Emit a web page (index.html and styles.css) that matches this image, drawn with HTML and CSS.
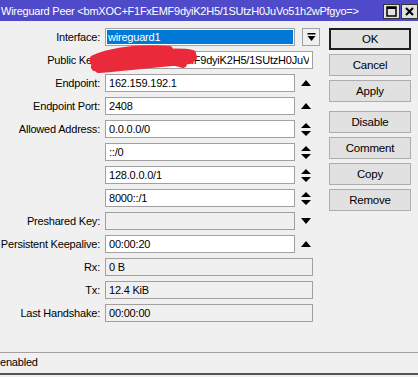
FILE: index.html
```html
<!DOCTYPE html>
<html lang="en">
<head>
    <meta charset="UTF-8">
    <title>Wireguard Peer</title>
    <link rel="stylesheet" href="styles.css">
</head>
<body>
<div class="window">
    <div class="titlebar">
        <span class="title">Wireguard Peer &lt;bmXOC+F1FxEMF9dyiK2H5/1SUtzH0JuVo51h2wPfgyo=&gt;</span>
        <div class="title-btns">
            <span class="tbtn"><svg width="11" height="11" viewBox="0 0 11 11"><rect x="1" y="1" width="9" height="9" fill="none" stroke="#000" stroke-width="1.5"/><rect x="1" y="1" width="9" height="2" fill="#000"/></svg></span>
            <span class="tbtn"><svg width="11" height="11" viewBox="0 0 11 11"><path d="M2 2L9 9M9 2L2 9" stroke="#000" stroke-width="2"/></svg></span>
        </div>
    </div>

    <div class="main">
        <div class="form">
            <label>Interface:</label>
            <div class="field selected">wireguard1</div>
            <span class="dropbtn"><svg width="9" height="9" viewBox="0 0 9 9"><rect x="0.5" y="0" width="8" height="1.5" fill="#000"/><path d="M0.5 3H8.5L4.5 8Z" fill="#000"/></svg></span>

            <label>Public Key:</label>
            <input class="field wide" type="text" readonly value="bmXOC+F1FxEMF9dyiK2H5/1SUtzH0JuVo51h2wPfgyo=">

            <label>Endpoint:</label>
            <div class="field">162.159.192.1</div>
            <span class="arrow"><svg width="10" height="6" viewBox="0 0 10 6"><path d="M0 6H10L5 0Z" fill="#000"/></svg></span>

            <label>Endpoint Port:</label>
            <div class="field">2408</div>
            <span class="arrow"><svg width="10" height="6" viewBox="0 0 10 6"><path d="M0 6H10L5 0Z" fill="#000"/></svg></span>

            <label>Allowed Address:</label>
            <div class="field">0.0.0.0/0</div>
            <span class="arrow"><svg width="10" height="13" viewBox="0 0 10 13"><path d="M0 5H10L5 0Z M0 8H10L5 13Z" fill="#000"/></svg></span>

            <label></label>
            <div class="field">::/0</div>
            <span class="arrow"><svg width="10" height="13" viewBox="0 0 10 13"><path d="M0 5H10L5 0Z M0 8H10L5 13Z" fill="#000"/></svg></span>

            <label></label>
            <div class="field">128.0.0.0/1</div>
            <span class="arrow"><svg width="10" height="13" viewBox="0 0 10 13"><path d="M0 5H10L5 0Z M0 8H10L5 13Z" fill="#000"/></svg></span>

            <label></label>
            <div class="field">8000::/1</div>
            <span class="arrow"><svg width="10" height="13" viewBox="0 0 10 13"><path d="M0 5H10L5 0Z M0 8H10L5 13Z" fill="#000"/></svg></span>

            <label>Preshared Key:</label>
            <div class="field readonly"></div>
            <span class="arrow"><svg width="10" height="6" viewBox="0 0 10 6"><path d="M0 0H10L5 6Z" fill="#000"/></svg></span>

            <label>Persistent Keepalive:</label>
            <div class="field">00:00:20</div>
            <span class="arrow"><svg width="10" height="6" viewBox="0 0 10 6"><path d="M0 6H10L5 0Z" fill="#000"/></svg></span>

            <label>Rx:</label>
            <div class="field wide readonly">0 B</div>

            <label>Tx:</label>
            <div class="field wide readonly">12.4 KiB</div>

            <label>Last Handshake:</label>
            <div class="field wide readonly">00:00:00</div>

            <!-- red marker scribble hiding the key -->
            <svg class="scribble" width="114" height="32" viewBox="0 0 114 32"><path d="M7 19C22 10 42 7 62 9S92 8 105 11M8 24C30 15 60 13 100 15M7 16C26 8 52 5 82 7M12 26C40 23 70 21 103 17M30 13C50 17 72 13 96 21M20 21C50 19 80 18 106 14" fill="none" stroke="#ea2a3b" stroke-width="8" stroke-linecap="round"/></svg>
        </div>

        <div class="buttons">
            <button class="default">OK</button>
            <button>Cancel</button>
            <button>Apply</button>
            <button class="spaced">Disable</button>
            <button>Comment</button>
            <button>Copy</button>
            <button>Remove</button>
        </div>
    </div>

    <div class="statusbar">enabled</div>
</div>
</body>
</html>
```

FILE: styles.css
```css
body {
    margin: 0;
    font-family: "Liberation Sans", Arial, sans-serif;
    font-size: 11px;
    letter-spacing: -0.2px;
    color: #000;
    background-color: #f0f0f0;
}
.window {
    width: 418px;
    height: 377px;
    display: flex;
    flex-direction: column;
    overflow: hidden;
}
.titlebar {
    height: 21px;
    background-color: #4f4ac9;
    color: #fff;
    display: flex;
    align-items: center;
    justify-content: space-between;
    padding-left: 1px;
}
.title {
    white-space: nowrap;
    font-size: 11px;
    letter-spacing: -0.25px;
}
.title-btns {
    display: flex;
    gap: 1px;
    align-self: flex-start;
    margin-top: 4px;
}
.tbtn {
    width: 15px;
    height: 13px;
    background-color: #e1e1e1;
    border: 1px solid #333;
    display: flex;
    align-items: center;
    justify-content: center;
}
.main {
    display: flex;
    flex: 1;
    padding-top: 7px;
}
.form {
    position: relative;
    display: grid;
    grid-template-columns: 100px 190px 18px;
    grid-auto-rows: 18px;
    column-gap: 5px;
    row-gap: 5px;
    align-items: center;
    align-content: start;
}
label {
    display: flex;
    justify-content: flex-end;
    white-space: nowrap;
    line-height: 18px;
}
.field {
    height: 18px;
    box-sizing: border-box;
    border: 1px solid #a0a0a0;
    background-color: #fff;
    padding: 0 3px;
    line-height: 16px;
    white-space: nowrap;
    overflow: hidden;
}
input.field {
    font: inherit;
    letter-spacing: inherit;
    color: #000;
    outline: none;
    width: auto;
    min-width: 0;
}
.field.wide {
    grid-column: 2 / 4;
    margin-right: 5px;
}
.field.readonly {
    background-color: #f0f0f0;
}
.field.selected {
    background-color: #0078d7;
    color: #fff;
    box-shadow: inset 0 0 0 1px #fff;
    padding: 0 2px;
}
.scribble {
    position: absolute;
    left: 87px;
    top: 15px;
}
.dropbtn {
    width: 16px;
    height: 16px;
    margin-left: 2px;
    border: 1px solid #a0a0a0;
    display: flex;
    align-items: center;
    justify-content: center;
}
.arrow {
    display: flex;
    align-items: center;
    padding-left: 1px;
}
.buttons {
    display: flex;
    flex-direction: column;
    gap: 4px;
    margin-left: 11px;
}
button {
    width: 82px;
    height: 22px;
    box-sizing: border-box;
    background-color: #e1e1e1;
    border: 1px solid #adadad;
    font-family: "Liberation Sans", Arial, sans-serif;
    font-size: 11.5px;
    letter-spacing: -0.2px;
    color: #000;
    padding: 0;
}
button.default {
    border: 2px solid #1e1e1e;
}
button.spaced {
    margin-top: 5px;
}
.statusbar {
    height: 20px;
    border-top: 1px solid #a0a0a0;
    border-bottom: 2px solid #555;
    line-height: 19px;
    margin-bottom: 2px;
}
```
